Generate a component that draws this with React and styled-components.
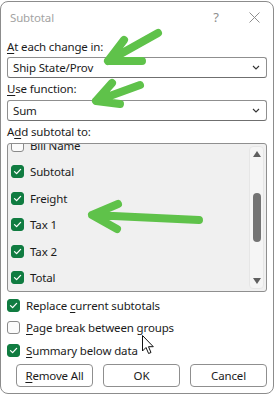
import React from "react";
import styled, { createGlobalStyle } from "styled-components";

const Global = createGlobalStyle`
  html, body { margin: 0; padding: 0; background: #ffffff; }
  body { font-family: "Noto Sans", "Open Sans", sans-serif; font-size: 11.5px; letter-spacing: -0.15px; color: #1b1b1b; }
  * { box-sizing: border-box; }
`;

const Stage = styled.div`
  position: relative;
  width: 275px;
  height: 394px;
  overflow: hidden;
`;

const Window = styled.div`
  width: 274px;
  height: 393px;
  margin: 1px 0 0 0;
  border: 1px solid #8c8c8c;
  border-radius: 8px;
  background: #ffffff;
  display: flex;
  flex-direction: column;
`;

const TitleBar = styled.div`
  height: 30px;
  display: flex;
  align-items: center;
  padding-left: 9px;
  color: #a3a3a3;
  font-size: 11.5px;
`;

const TitleText = styled.div`
  flex: 1;
`;

const TitleButton = styled.div`
  width: 38px;
  height: 30px;
  display: flex;
  align-items: center;
  justify-content: center;
  color: #8e8e8e;
  font-size: 13px;
`;

const Body = styled.div`
  padding: 7px 6px 0 6px;
  display: flex;
  flex-direction: column;
`;

const Label = styled.div`
  height: 16px;
  line-height: 16px;
  margin-bottom: ${(p) => p.$mb ?? 2}px;
  margin-top: ${(p) => p.$mt ?? 0}px;
  white-space: nowrap;
`;

const U = styled.span`
  text-decoration: underline;
  text-underline-offset: 2px;
  text-decoration-thickness: 1px;
`;

const Select = styled.div`
  height: 21px;
  border: 1px solid #8f8f8f;
  border-bottom-color: #6f6f6f;
  border-radius: 3px;
  background: #ffffff;
  display: flex;
  align-items: center;
  padding: 0 6px 0 5px;
`;

const SelectText = styled.div`
  flex: 1;
  line-height: 19px;
`;

const ListBox = styled.div`
  margin-top: 3px;
  height: 149px;
  border: 1px solid #8f8f8f;
  border-radius: 3px;
  background: #f0f0f0;
  display: flex;
  overflow: hidden;
`;

const ListItems = styled.div`
  flex: 1;
  overflow: hidden;
`;

const ListInner = styled.div`
  margin-top: -12px;
  display: flex;
  flex-direction: column;
`;

const ListRow = styled.div`
  height: 26.5px;
  display: flex;
  align-items: center;
  padding-left: 3px;
  gap: 6px;
`;

const Box = styled.div`
  width: 13px;
  height: 13px;
  border-radius: 3px;
  flex: none;
  display: flex;
  align-items: center;
  justify-content: center;
  background: ${(p) => (p.$on ? "#107c41" : "#fbfbfb")};
  border: 1px solid ${(p) => (p.$on ? "#107c41" : "#8a8a8a")};
`;

const ScrollTrack = styled.div`
  width: 15px;
  margin: 2px 2px 2px 0;
  border-radius: 4px;
  background: #f5f5f5;
  border: 1px solid #e6e6e6;
  display: flex;
  flex-direction: column;
  align-items: center;
`;

const ScrollArrow = styled.div`
  height: 14px;
  display: flex;
  align-items: center;
  justify-content: center;
`;

const ScrollSpace = styled.div`
  flex: 1;
  width: 100%;
  display: flex;
  flex-direction: column;
  align-items: center;
  padding-top: 32px;
`;

const Thumb = styled.div`
  width: 8px;
  height: 49px;
  border-radius: 4px;
  background: #737373;
`;

const OptionRow = styled.div`
  height: 22.5px;
  display: flex;
  align-items: center;
  gap: 6px;
  white-space: nowrap;
`;

const Options = styled.div`
  margin-top: 2px;
  display: flex;
  flex-direction: column;
`;

const Buttons = styled.div`
  margin-top: 2px;
  padding-left: 9px;
  display: flex;
  gap: 10px;
`;

const Button = styled.div`
  width: 78px;
  height: 23px;
  border: 1px solid #8f8f8f;
  border-radius: 4px;
  background: #ffffff;
  display: flex;
  align-items: center;
  justify-content: center;
`;

const Overlay = styled.svg`
  position: absolute;
  left: 0;
  top: 0;
  pointer-events: none;
`;

const Check = () => (
  <svg width="9" height="9" viewBox="0 0 9 9">
    <path d="M1.5 4.6 L3.6 6.6 L7.6 2.4" fill="none" stroke="#ffffff" strokeWidth="1.3" strokeLinecap="round" strokeLinejoin="round" />
  </svg>
);

const Chevron = () => (
  <svg width="8" height="5" viewBox="0 0 8 5">
    <path d="M1 1 L4 4 L7 1" fill="none" stroke="#333" strokeWidth="1.1" />
  </svg>
);

const CheckBox = ({ on }) => <Box $on={on}>{on && <Check />}</Box>;

const items = [
  ["Bill Name", false],
  ["Subtotal", true],
  ["Freight", true],
  ["Tax 1", true],
  ["Tax 2", true],
  ["Total", true],
];

export default function App() {
  const green = "#5fc24a";
  return (
    <>
      <Global />
      <Stage>
        <Window>
          <TitleBar>
            <TitleText>Subtotal</TitleText>
            <TitleButton>?</TitleButton>
            <TitleButton>
              <svg width="11" height="11" viewBox="0 0 11 11">
                <path d="M0.5 0.5 L10.5 10.5 M10.5 0.5 L0.5 10.5" stroke="#8e8e8e" strokeWidth="1" />
              </svg>
            </TitleButton>
          </TitleBar>
          <Body>
            <Label $mb={2}>
              <U>A</U>t each change in:
            </Label>
            <Select>
              <SelectText>Ship State/Prov</SelectText>
              <Chevron />
            </Select>
            <Label $mt={3} $mb={3}>
              <U>U</U>se function:
            </Label>
            <Select>
              <SelectText>Sum</SelectText>
              <Chevron />
            </Select>
            <Label $mt={3} $mb={0}>
              A<U>d</U>d subtotal to:
            </Label>
            <ListBox>
              <ListItems>
                <ListInner>
                  {items.map(([name, on]) => (
                    <ListRow key={name}>
                      <CheckBox on={on} />
                      <span>{name}</span>
                    </ListRow>
                  ))}
                </ListInner>
              </ListItems>
              <ScrollTrack>
                <ScrollArrow>
                  <svg width="8" height="6" viewBox="0 0 8 6">
                    <path d="M0 6 L4 0 L8 6 Z" fill="#5f5f5f" />
                  </svg>
                </ScrollArrow>
                <ScrollSpace>
                  <Thumb />
                </ScrollSpace>
                <ScrollArrow>
                  <svg width="8" height="6" viewBox="0 0 8 6">
                    <path d="M0 0 L8 0 L4 6 Z" fill="#5f5f5f" />
                  </svg>
                </ScrollArrow>
              </ScrollTrack>
            </ListBox>
            <Options>
              <OptionRow>
                <CheckBox on />
                <span>
                  Replace <U>c</U>urrent subtotals
                </span>
              </OptionRow>
              <OptionRow>
                <CheckBox on={false} />
                <span>
                  <U>P</U>age break between groups
                </span>
              </OptionRow>
              <OptionRow>
                <CheckBox on />
                <span>
                  <U>S</U>ummary below data
                </span>
              </OptionRow>
            </Options>
            <Buttons>
              <Button>
                <span>
                  <U>R</U>emove All
                </span>
              </Button>
              <Button>OK</Button>
              <Button>Cancel</Button>
            </Buttons>
          </Body>
        </Window>
        <Overlay width="275" height="394" viewBox="0 0 275 394">
          <g fill="none" stroke={green} strokeWidth="8" strokeLinecap="round" strokeLinejoin="round">
            <path d="M158 33 L108 61 M124 40 L108 61 L142 61" />
            <path d="M140 85 L96 101 M112 83 L96 101 L120 104" />
            <path d="M199 220 L92 215 M118 204 L92 215 L117 229" />
          </g>
          <path
            d="M142.5 335.5 L142.5 351 L146 347.5 L148.6 353.5 L151 352.5 L148.5 346.7 L153.3 346.7 Z"
            fill="#ffffff"
            stroke="#111"
            strokeWidth="1"
            strokeLinejoin="round"
          />
        </Overlay>
      </Stage>
    </>
  );
}
